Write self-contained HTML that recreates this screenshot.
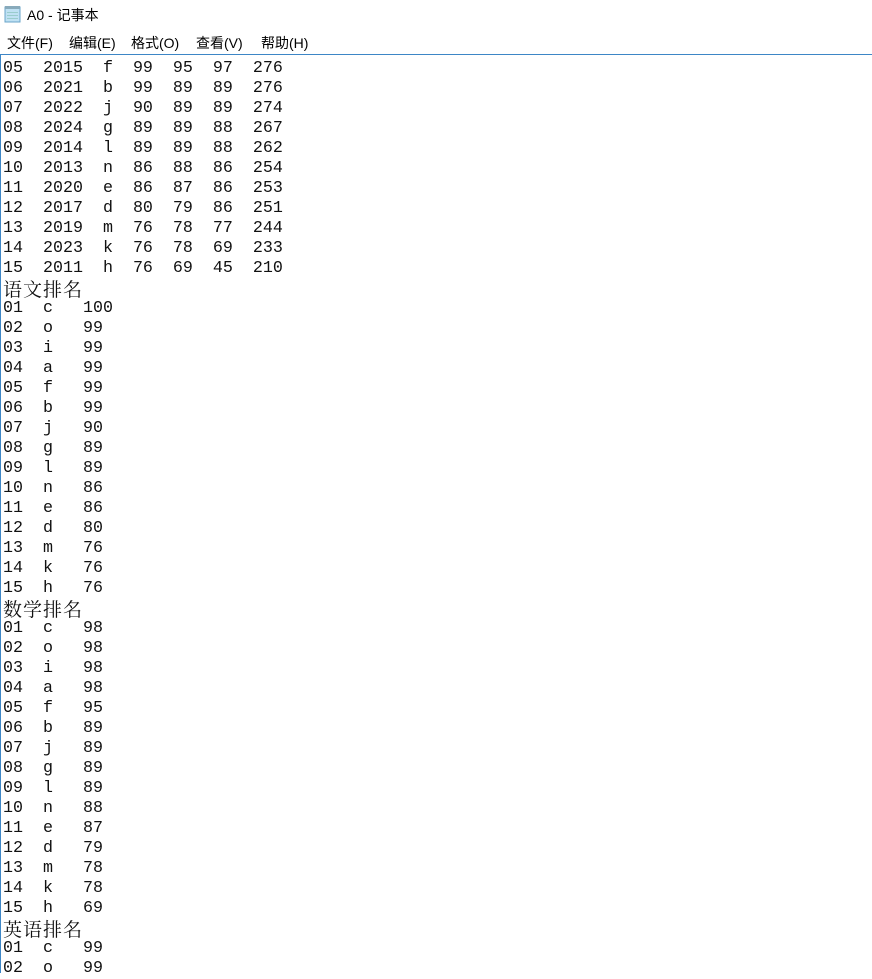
<!DOCTYPE html>
<html><head><meta charset="utf-8">
<style>
html,body{margin:0;padding:0;background:#fff;width:872px;height:973px;overflow:hidden}
.title{position:absolute;left:27px;top:5px;font:14px "Liberation Sans","Noto Sans CJK SC",sans-serif;color:#000}
.menu{position:absolute;top:33px;font:14px "Liberation Sans","Noto Sans CJK SC",sans-serif;color:#000}
.line{position:absolute;left:0;top:54px;width:872px;height:1px;background:#3d86c6}
.vline{position:absolute;left:0;top:54px;width:1px;height:919px;background:#3d86c6}
pre{position:absolute;left:3px;top:59px;margin:0;font-family:"Liberation Mono",monospace;font-size:16.67px;line-height:20px;color:#111}
.c{font-family:"Noto Serif CJK SC","Noto Sans CJK SC",serif;font-size:19px;letter-spacing:1px;display:inline-block;height:20px;line-height:20px;vertical-align:top}
</style></head><body>
<svg style="position:absolute;left:4px;top:5px" width="17" height="18" viewBox="0 0 17 18">
<rect x="1" y="2" width="15" height="15" fill="#bfe1f3" stroke="#6aa4c8"/>
<rect x="1" y="1" width="15" height="3" fill="#8ab"/>
<g stroke="#9cc" stroke-width="1"><line x1="3" y1="7.5" x2="14" y2="7.5"/><line x1="3" y1="10.5" x2="14" y2="10.5"/><line x1="3" y1="13.5" x2="14" y2="13.5"/></g>
</svg>
<div class="title">A0 - 记事本</div>
<div class="menu" style="left:7px">文件(F)</div>
<div class="menu" style="left:69px">编辑(E)</div>
<div class="menu" style="left:131px">格式(O)</div>
<div class="menu" style="left:196px">查看(V)</div>
<div class="menu" style="left:261px">帮助(H)</div>
<div class="line"></div><div class="vline"></div>
<pre>05  2015  f  99  95  97  276
06  2021  b  99  89  89  276
07  2022  j  90  89  89  274
08  2024  g  89  89  88  267
09  2014  l  89  89  88  262
10  2013  n  86  88  86  254
11  2020  e  86  87  86  253
12  2017  d  80  79  86  251
13  2019  m  76  78  77  244
14  2023  k  76  78  69  233
15  2011  h  76  69  45  210
<span class="c">语文排名</span>
01  c   100
02  o   99
03  i   99
04  a   99
05  f   99
06  b   99
07  j   90
08  g   89
09  l   89
10  n   86
11  e   86
12  d   80
13  m   76
14  k   76
15  h   76
<span class="c">数学排名</span>
01  c   98
02  o   98
03  i   98
04  a   98
05  f   95
06  b   89
07  j   89
08  g   89
09  l   89
10  n   88
11  e   87
12  d   79
13  m   78
14  k   78
15  h   69
<span class="c">英语排名</span>
01  c   99
02  o   99</pre>
</body></html>
